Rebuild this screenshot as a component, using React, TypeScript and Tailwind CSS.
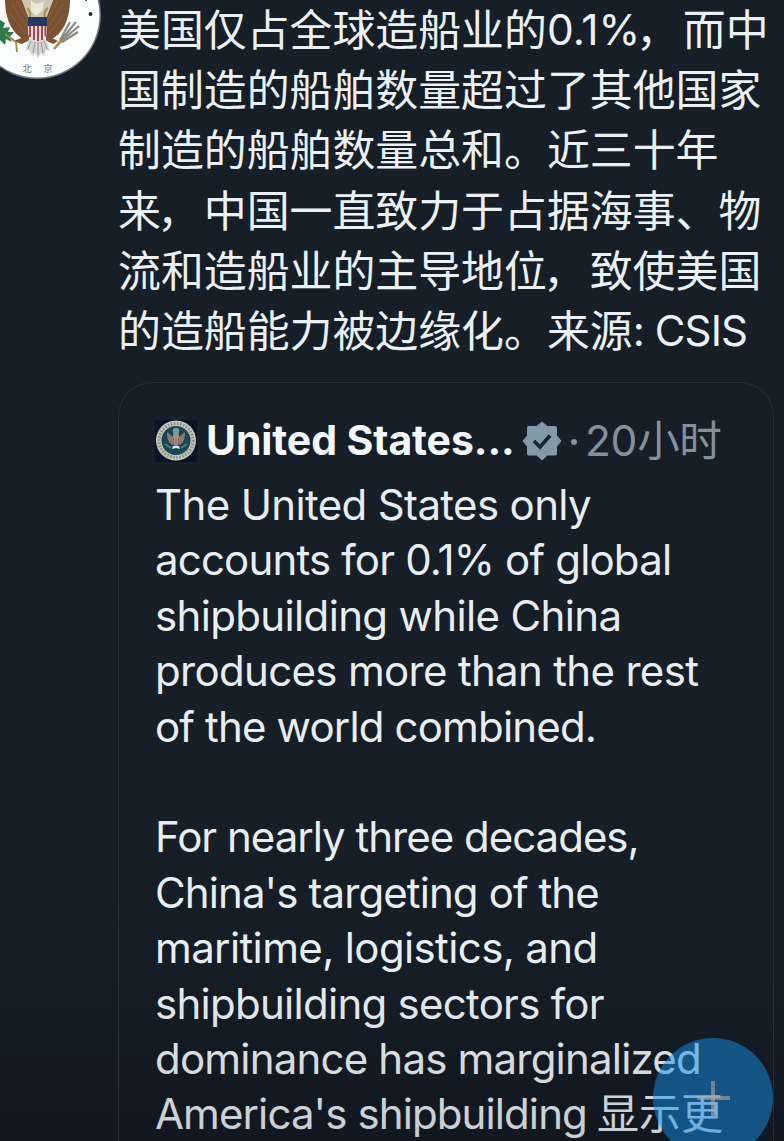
import clsx from "clsx";

const LATIN = "font-['Inter','Noto_Sans_CJK_SC',sans-serif]";

const postLines = [
  "国制造的船舶数量超过了其他国家",
  "制造的船舶数量总和。近三十年",
  "来，中国一直致力于占据海事、物",
  "流和造船业的主导地位，致使美国",
];

const quoteLines = [
  { text: "The United States only", tracking: "tracking-[-0.64px]" },
  { text: "accounts for 0.1% of global", tracking: "tracking-[-0.82px]" },
  { text: "shipbuilding while China", tracking: "tracking-[-0.65px]" },
  { text: "produces more than the rest", tracking: "tracking-[-0.68px]" },
  { text: "of the world combined.", tracking: "tracking-[-0.83px]" },
  { text: "", tracking: "" },
  { text: "For nearly three decades,", tracking: "tracking-[-1px]" },
  { text: "China's targeting of the", tracking: "tracking-[-0.9px]" },
  { text: "maritime, logistics, and", tracking: "tracking-[-0.63px]" },
  { text: "shipbuilding sectors for", tracking: "tracking-[-0.73px]" },
  { text: "dominance has marginalized", tracking: "tracking-[-0.8px]" },
];

const Avatar = () => (
  <svg viewBox="0 0 104 80" className="h-20 w-[104px] shrink-0">
    <circle cx="37" cy="15" r="64" fill="#6f767c" />
    <circle cx="37" cy="15" r="62.5" fill="#fbfcfc" />
    {/* wings */}
    <path d="M5 0 C5 14 9 29 20 37 C24 40 29 40 30 36 L29 18 L22 0 Z" fill="#7a5233" />
    <path d="M70 0 C70 14 66 29 55 37 C51 40 46 40 45 36 L46 18 L53 0 Z" fill="#7a5233" />
    <path d="M12 4 L27 28 M17 1 L28 20 M10 14 L26 34 M63 4 L48 28 M58 1 L47 20 M65 14 L49 34" stroke="#8d6340" strokeWidth="1" fill="none" />
    <path d="M22 0 L29 19 L46 19 L53 0 Z" fill="#cdc5ad" />
    <path d="M31 0 C34 5 41 5 44 0 L43 10 L36 16 L31 11 Z" fill="#eee9d6" />
    <path d="M27 8 Q31 12 30 17 M48 8 Q43 12 45 17" stroke="#a88c50" strokeWidth="2" fill="none" />
    {/* legs and tail */}
    <path d="M27 36 L13 41 L22 44 L30 40 Z M48 36 L58 41 L53 44 L45 40 Z" fill="#805432" />
    <path d="M29 39 L25 51 L29 50 L32 56 L35 53 L38 58 L41 53 L44 56 L46 50 L50 51 L46 39 Z" fill="#d5d4d1" />
    <path d="M31 41 L28 49 M35 42 L33 53 M38 42 V55 M41 42 L43 53 M44 41 L47 49" stroke="#8d8c8a" strokeWidth="0.9" />
    {/* shield */}
    <path d="M28 18 H47 V33 C47 38 41 40 37.5 42 C34 40 28 38 28 33 Z" fill="#e9d8d9" />
    <path d="M30 26 V37 M34 26 V40 M38 26 V41 M42 26 V40 M45.5 26 V36" stroke="#a04150" strokeWidth="1.9" />
    <path d="M28 17 H47 V26 H28 Z" fill="#243765" />
    {/* olive branch */}
    <path d="M0 20 L5 23 L3 28 L10 27 L8 32 L14 32 L10 37 L12 42 L6 39 L5 45 L0 40 Z" fill="#2c7950" />
    <path d="M5 34 L16 42 L17 52" stroke="#a28b43" strokeWidth="1.8" fill="none" />
    {/* arrows */}
    <path d="M58 44 L76 22 M60 42 L79 26 M60 40 L70 22 M62 42 L78 32" stroke="#8b8b88" strokeWidth="2.2" fill="none" />
    <path d="M54 49 L64 38" stroke="#a28b43" strokeWidth="2.5" />
    <circle cx="90.500" cy="14" r="2" fill="#292c31" />
    <circle cx="86" cy="0" r="1" fill="#292c31" />
    <text x="22.500" y="71.500" fontSize="9" fill="#77736f" fontFamily="Noto Sans CJK SC, sans-serif">北</text>
    <text x="43.500" y="71.500" fontSize="9" fill="#77736f" fontFamily="Noto Sans CJK SC, sans-serif">京</text>
  </svg>
);

const Seal = () => (
  <svg viewBox="0 0 42 42" className="h-[42px] w-[42px] shrink-0">
    <rect width="42" height="42" fill="#0b1126" />
    <circle cx="21" cy="20.500" r="20" fill="#c3c7ba" />
    <circle cx="21" cy="20.500" r="17" fill="none" stroke="#858d86" strokeWidth="3" strokeDasharray="1.5 1.600" />
    <circle cx="21" cy="20.500" r="14.500" fill="#1a4558" />
    <circle cx="21" cy="11" r="3.200" fill="#7d9da3" />
    <path d="M12 12 C12 18 13 23 18 25 L18 17 Z M30 12 C30 18 29 23 24 25 L24 17 Z" fill="#8a7d70" />
    <path d="M18 14 H24 V24 L21 27 L18 24 Z" fill="#a3958c" />
    <path d="M18.500 18 V24 M21 18 V26 M23.500 18 V24" stroke="#8d5a5c" strokeWidth="0.9" />
    <path d="M18 26 L17 29 L21 28 L25 29 L24 26 Z" fill="#dfe4ee" />
    <path d="M10 24 L16 28 M32 24 L26 28" stroke="#4f8078" strokeWidth="2" />
  </svg>
);

const Verified = () => (
  <svg viewBox="0 0 40 40" className="h-10 w-10 shrink-0">
    <path
      d="M20 1 L25.500 5.500 H33.500 Q34.500 5.500 34.500 6.500 V14.500 L39 20 L34.500 25.500 V33 Q34.500 34 33.500 34 H25.500 L20 39 L14.500 34 H6.500 Q5.500 34 5.500 33 V25.500 L1 20 L5.500 14.500 V6.500 Q5.500 5.500 6.500 5.500 H14.500 Z"
      fill="#8299ab"
      stroke="#8299ab"
      strokeLinejoin="round"
    />
    <path d="M12 20 L18 26 L28 14.500" fill="none" stroke="#162330" strokeWidth="3.600" />
  </svg>
);

// full-width comma that hugs the glyph before it
const PostText = ({ text }: { text: string }) => (
  <>
    {text.split(/(，)/).map((part, i) =>
      part === "，" ? (
        <span key={i} className="relative -left-[4px]">
          {part}
        </span>
      ) : (
        part
      )
    )}
  </>
);

const QuoteCard = () => (
  <section className="h-[820px] w-[656px] rounded-[34px] border border-[#27313a] pl-[36px] pt-[30px]">
    <div className="flex h-14 items-center">
      <Seal />
      <span className="ml-[9px] w-[310px] whitespace-nowrap text-[41px] font-bold tracking-[-0.1px] text-[#f5f8fb]">
        United States...
      </span>
      <span className="ml-[6px]">
        <Verified />
      </span>
      <span className="ml-[9px] mt-[2px] h-[6px] w-[6px] rounded-full bg-[#87929c]" />
      <span className="ml-[8px] whitespace-nowrap text-[42.5px] tracking-[-0.3px] text-[#84909a]">
        20小时
      </span>
    </div>
    <div className="mt-[8px] text-[42px] leading-[55.4px] text-[#e8edf1]">
      {quoteLines.map((line, i) => (
        <p key={i} className={clsx("h-[55.4px] whitespace-nowrap", line.tracking)}>
          {line.text}
        </p>
      ))}
      <p className="flex h-[55.4px] whitespace-nowrap">
        <span className="w-[442px] tracking-[-0.9px]">America's shipbuilding</span>
        <span>显示更</span>
      </p>
    </div>
  </section>
);

const App = () => {
  return (
    <main
      className={clsx(
        "relative flex h-[1141px] w-[784px] overflow-hidden bg-linear-to-b from-[#161f28] from-75% to-[#121922]",
        LATIN
      )}
    >
      <div className="w-[118px] shrink-0">
        <Avatar />
      </div>
      <div className="shrink-0">
        <div className="h-[382px] whitespace-nowrap text-[42.9px] leading-[60.2px] text-[#eaf0f4]">
          <p className="flex h-[60.2px]">
            <span>美国仅占全球造船业的</span>
            <span className="w-[93px] text-[42.5px]">0.1%</span>
            <span>
              <PostText text="，而中" />
            </span>
          </p>
          {postLines.map((line) => (
            <p key={line} className="h-[60.2px]">
              <PostText text={line} />
            </p>
          ))}
          <p className="flex h-[60.2px]">
            <span>的造船能力被边缘化。来源</span>
            <span className="whitespace-pre text-[42px] tracking-[-0.9px]">: CSIS</span>
          </p>
        </div>
        <QuoteCard />
      </div>
      <div className="absolute inset-x-0 bottom-0 h-[170px] bg-linear-to-b from-transparent to-[#0a0e16]/15" />
      <button className="absolute left-[653px] top-[1038px] h-[120px] w-[120px] rounded-full bg-[#1690e8]/50">
        <span className="absolute left-[44px] top-[58px] h-1 w-[33px] bg-[#b5a698]/60" />
        <span className="absolute left-[58px] top-[43px] h-[35px] w-1 bg-[#b5a698]/60" />
      </button>
    </main>
  );
};

export default App;
